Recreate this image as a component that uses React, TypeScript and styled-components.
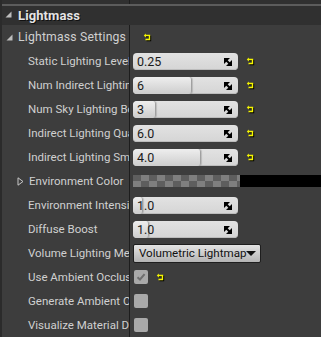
import styled, {createGlobalStyle} from "styled-components";

const Global = createGlobalStyle`
  html, body {
    margin: 0;
    padding: 0;
    background: #3d3d3d;
    overflow: hidden;
  }
  #root {
    height: 337px;
  }
`;

type Row =
  | {kind: "number"; label: string; value: string; fill?: number; reset?: boolean}
  | {kind: "color"; label: string}
  | {kind: "select"; label: string; value: string}
  | {kind: "check"; label: string; checked: boolean; reset?: boolean};

const rows: Row[] = [
  {kind: "number", label: "Static Lighting Level Scale", value: "0.25", reset: true},
  {kind: "number", label: "Num Indirect Lighting Bounces", value: "6", fill: 55, reset: true},
  {kind: "number", label: "Num Sky Lighting Bounces", value: "3", fill: 21, reset: true},
  {kind: "number", label: "Indirect Lighting Quality", value: "6.0", reset: true},
  {kind: "number", label: "Indirect Lighting Smoothness", value: "4.0", fill: 64, reset: true},
  {kind: "color", label: "Environment Color"},
  {kind: "number", label: "Environment Intensity", value: "1.0", fill: 9},
  {kind: "number", label: "Diffuse Boost", value: "1.0", fill: 14},
  {kind: "select", label: "Volume Lighting Method", value: "Volumetric Lightmap"},
  {kind: "check", label: "Use Ambient Occlusion", checked: true, reset: true},
  {kind: "check", label: "Generate Ambient Occlusion Material Mask", checked: false},
  {kind: "check", label: "Visualize Material Diffuse", checked: false},
];

const ResetArrow = () => (
  <ResetIcon width="9" height="9" viewBox="0 0 9 9">
    <path d="M2 2.5H6.5V6.5H2.5" fill="none" stroke="#000" strokeWidth="1.4" transform="translate(1 1)"/>
    <path d="M2 2.5H6.5V6.5H2.5" fill="none" stroke="#f5f500" strokeWidth="1.4"/>
    <path d="M0.8 2.5L2.8 0.6V4.4Z" fill="#f5f500"/>
  </ResetIcon>
);

const ExpandIcon = () => (
  <svg width="8" height="8" viewBox="0 0 8 8">
    <path d="M0 0H6L0 6Z" fill="#000"/>
    <path d="M8 8H2L8 2Z" fill="#000"/>
    <path d="M2 2L6 6" stroke="#000" strokeWidth="2"/>
  </svg>
);

const Triangle = ({open = true}: {open?: boolean}) =>
  open ? (
    <svg width="7" height="7" viewBox="0 0 7 7">
      <path d="M6.5 0.5V6.5H0.5Z" fill="#bdbdbd"/>
    </svg>
  ) : (
    <svg width="7" height="9" viewBox="0 0 7 9">
      <path d="M1 0.8L6 4.5L1 8.2Z" fill="none" stroke="#c8c8c8" strokeWidth="1"/>
    </svg>
  );

export default function App() {
  return (
    <>
      <Global/>
      <Panel>
        <TopStrip>
          <TopLeft/>
          <TopDivider/>
          <TopRight/>
        </TopStrip>
        <Rule/>
        <Category>
          <Triangle/>
          <CategoryTitle>Lightmass</CategoryTitle>
        </Category>
        <Body>
          <PropRow>
            <NameCell $indent={6}>
              <Triangle/>
              <GroupLabel>Lightmass Settings</GroupLabel>
            </NameCell>
            <ValueCell>
              <ResetSlot $left={10}><ResetArrow/></ResetSlot>
            </ValueCell>
          </PropRow>
          {rows.map((r) => (
            <PropRow key={r.label}>
              <NameCell $indent={r.kind === "color" ? 17 : 28}>
                {r.kind === "color" && <Triangle open={false}/>}
                <Label>{r.label}</Label>
              </NameCell>
              <ValueCell>
                {r.kind === "number" && (
                  <>
                    <NumberBox>
                      {r.fill !== undefined && <SliderFill style={{width: `${r.fill}%`}}/>}
                      <NumberText>{r.value}</NumberText>
                      <ExpandSlot><ExpandIcon/></ExpandSlot>
                    </NumberBox>
                    {r.reset && <ResetSlot $left={8}><ResetArrow/></ResetSlot>}
                  </>
                )}
                {r.kind === "color" && (
                  <ColorBlock>
                    <Checker/>
                    <ColorRest/>
                  </ColorBlock>
                )}
                {r.kind === "select" && (
                  <Select>
                    <SelectText>{r.value}</SelectText>
                    <Caret/>
                  </Select>
                )}
                {r.kind === "check" && (
                  <>
                    <CheckBox>
                      {r.checked && (
                        <svg width="10" height="10" viewBox="0 0 10 10">
                          <path d="M1.5 5.2L4 7.5L8.6 2.2" fill="none" stroke="#6e6e6e" strokeWidth="2"/>
                        </svg>
                      )}
                    </CheckBox>
                    {r.reset && <ResetSlot $left={8}><ResetArrow/></ResetSlot>}
                  </>
                )}
              </ValueCell>
            </PropRow>
          ))}
        </Body>
      </Panel>
    </>
  );
}

const Panel = styled.div`
  width: 321px;
  height: 337px;
  display: flex;
  flex-direction: column;
  background: #3d3d3d;
  border-left: 2px solid #2b2b2b;
  box-sizing: border-box;
  font-family: Roboto, "Liberation Sans", sans-serif;
  overflow: hidden;
`;

const TopStrip = styled.div`
  display: flex;
  height: 5px;
  background: #303030;
`;

const TopLeft = styled.div`
  width: 127px;
`;

const TopDivider = styled.div`
  width: 1px;
  background: #1d1d1d;
`;

const TopRight = styled.div`
  flex: 1;
`;

const Rule = styled.div`
  height: 2px;
  background: #5c5c5c;
`;

const Category = styled.div`
  height: 22px;
  background: #303030;
  display: flex;
  align-items: center;
  gap: 6px;
  padding-left: 3px;
  svg {
    margin-top: -2px;
  }
`;

const CategoryTitle = styled.span`
  font-size: 13px;
  font-weight: bold;
  color: #e4e4e4;
  text-shadow: 1px 1px 0 #111;
  letter-spacing: 0.1px;
`;

const Body = styled.div`
  flex: 1;
  display: flex;
  flex-direction: column;
  background: linear-gradient(to right, transparent 127px, #1d1d1d 127px, #1d1d1d 128px, transparent 128px);
`;

const PropRow = styled.div`
  height: 24px;
  flex: none;
  display: grid;
  grid-template-columns: 127px 1fr;
`;

const NameCell = styled.div<{$indent: number}>`
  display: flex;
  align-items: center;
  gap: 5px;
  padding-left: ${(p) => p.$indent - 2}px;
  overflow: hidden;
  white-space: nowrap;
`;

const Label = styled.span`
  font-size: 11.5px;
  color: #d0d0d0;
  white-space: nowrap;
`;

const GroupLabel = styled(Label)`
  font-size: 12.2px;
  letter-spacing: 0.2px;
`;

const ValueCell = styled.div`
  display: flex;
  align-items: center;
  padding-left: 4px;
  min-width: 0;
`;

const NumberBox = styled.div`
  position: relative;
  width: 105px;
  height: 17px;
  margin-top: 1px;
  border-radius: 4px;
  background: linear-gradient(#e2e2e2, #d5d5d5);
  box-shadow: inset 0 -1px 0 #bcbcbc;
  display: flex;
  align-items: center;
  overflow: hidden;
`;

const SliderFill = styled.div`
  position: absolute;
  left: 0;
  top: 0;
  bottom: 0;
  background: linear-gradient(#eeeeee, #cdcdcd);
  border-right: 1px solid #a0a0a0;
  box-shadow: 1px 0 1px rgba(0, 0, 0, 0.15);
  border-radius: 4px 3px 3px 4px;
`;

const NumberText = styled.span`
  position: relative;
  padding-left: 4px;
  font-size: 12.5px;
  color: #1a1a1a;
  flex: 1;
`;

const ExpandSlot = styled.span`
  position: relative;
  display: flex;
  margin-right: 6px;
`;

const ResetIcon = styled.svg`
  display: block;
`;

const ResetSlot = styled.span<{$left: number}>`
  display: flex;
  margin-left: ${(p) => p.$left}px;
`;

const ColorBlock = styled.div`
  flex: 1;
  height: 12px;
  display: flex;
  margin-right: -2px;
`;

const Checker = styled.div`
  width: 107px;
  background-color: #5e5e5e;
  background-image: conic-gradient(#7f7f7f 25%, #5e5e5e 0 50%, #7f7f7f 0 75%, #5e5e5e 0);
  background-size: 16px 12px;
`;

const ColorRest = styled.div`
  flex: 1;
  background: #000;
`;

const Select = styled.div`
  width: 128px;
  height: 19px;
  box-sizing: border-box;
  border: 1px solid #1e1e1e;
  border-radius: 2px;
  background: linear-gradient(#e4e4e4, #b4b4b4);
  display: flex;
  align-items: center;
  justify-content: space-between;
  padding: 0 4px 0 5px;
  color: #111;
`;

const SelectText = styled.span`
  font-size: 11.6px;
  white-space: nowrap;
`;

const Caret = styled.span`
  width: 0;
  height: 0;
  border-left: 5px solid transparent;
  border-right: 5px solid transparent;
  border-top: 5px solid #111;
`;

const CheckBox = styled.div`
  width: 14px;
  height: 14px;
  margin-left: 1px;
  border-radius: 2px;
  background: #a9a9a9;
  display: flex;
  align-items: center;
  justify-content: center;
`;
